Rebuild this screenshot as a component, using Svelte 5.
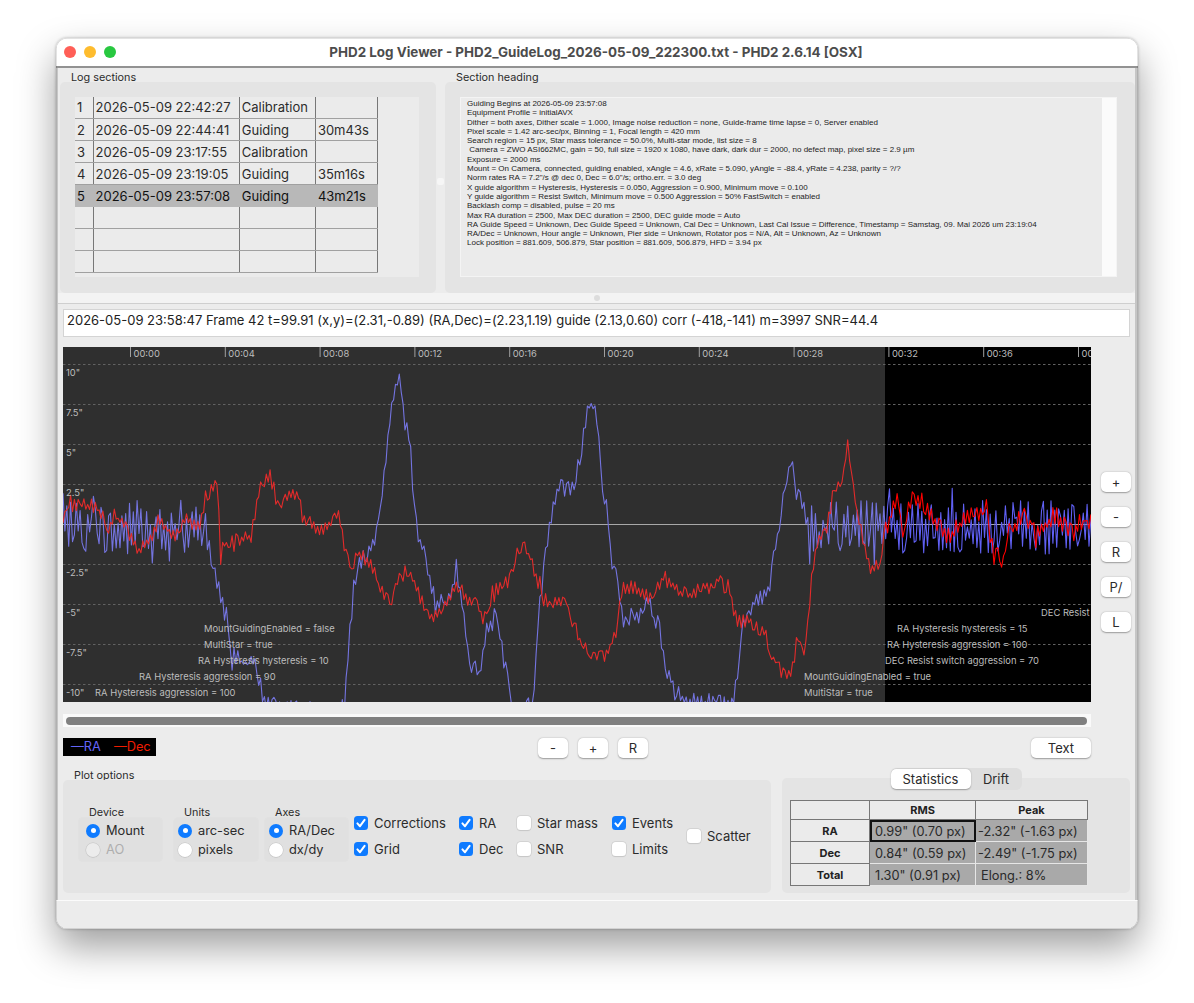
<script>
  const sections = [
    ['1', '2026-05-09 22:42:27', 'Calibration', ''],
    ['2', '2026-05-09 22:44:41', 'Guiding', '30m43s'],
    ['3', '2026-05-09 23:17:55', 'Calibration', ''],
    ['4', '2026-05-09 23:19:05', 'Guiding', '35m16s'],
    ['5', '2026-05-09 23:57:08', 'Guiding', '43m21s'],
    ['', '', '', ''],
    ['', '', '', ''],
    ['', '', '', '']
  ];

  const heading = [
    'Guiding Begins at 2026-05-09 23:57:08',
    'Equipment Profile = initialAVX',
    'Dither = both axes, Dither scale = 1.000, Image noise reduction = none, Guide-frame time lapse = 0, Server enabled',
    'Pixel scale = 1.42 arc-sec/px, Binning = 1, Focal length = 420 mm',
    'Search region = 15 px, Star mass tolerance = 50.0%, Multi-star mode, list size = 8',
    ' Camera = ZWO ASI662MC, gain = 50, full size = 1920 x 1080, have dark, dark dur = 2000, no defect map, pixel size = 2.9 µm',
    'Exposure = 2000 ms',
    'Mount = On Camera, connected, guiding enabled, xAngle = 4.6, xRate = 5.090, yAngle = -88.4, yRate = 4.238, parity = ?/?',
    'Norm rates RA = 7.2"/s @ dec 0, Dec = 6.0"/s; ortho.err. = 3.0 deg',
    'X guide algorithm = Hysteresis, Hysteresis = 0.050, Aggression = 0.900, Minimum move = 0.100',
    'Y guide algorithm = Resist Switch, Minimum move = 0.500 Aggression = 50% FastSwitch = enabled',
    'Backlash comp = disabled, pulse = 20 ms',
    'Max RA duration = 2500, Max DEC duration = 2500, DEC guide mode = Auto',
    'RA Guide Speed = Unknown, Dec Guide Speed = Unknown, Cal Dec = Unknown, Last Cal Issue = Difference, Timestamp = Samstag, 09. Mai 2026 um 23:19:04',
    'RA/Dec = Unknown, Hour angle = Unknown, Pier side = Unknown, Rotator pos = N/A, Alt = Unknown, Az = Unknown',
    'Lock position = 881.609, 506.879, Star position = 881.609, 506.879, HFD = 3.94 px'
  ];

  const gridY = [364, 404, 444, 484, 564, 604, 644, 684];
  const yLabels = [
    ['10"', 372], ['7.5"', 412], ['5"', 452], ['2.5"', 492],
    ['-2.5"', 572], ['-5"', 612], ['-7.5"', 652], ['-10"', 692]
  ];
  const ticks = ['00:00', '00:04', '00:08', '00:12', '00:16', '00:20', '00:24', '00:28', '00:32', '00:36', '00:40'];
  const events = [
    ['MountGuidingEnabled = false', 204, 628],
    ['MultiStar = true', 204, 644],
    ['RA Hysteresis hysteresis = 10', 198, 660],
    ['RA Hysteresis aggression = 90', 139, 676],
    ['RA Hysteresis aggression = 100', 95, 692],
    ['DEC Resist', 1041, 612],
    ['RA Hysteresis hysteresis = 15', 897, 628],
    ['RA Hysteresis aggression = 100', 887, 644],
    ['DEC Resist switch aggression = 70', 885, 660],
    ['MountGuidingEnabled = true', 804, 676],
    ['MultiStar = true', 804, 692]
  ];

  // trend of each trace, in screen coordinates, noise goes on top
  const raKeys = [[63,527],[195,527],[205,530],[216,580],[223,603],[228,617],[229,657],[243,657],[256,663],[264,706],[344,715],[346,680],[351,623],[354,580],[363,557],[376,540],[381,507],[384,473],[388,437],[394,390],[400,378],[403,410],[409,440],[411,457],[414,507],[418,537],[426,553],[429,580],[436,607],[449,600],[457,573],[463,607],[470,667],[480,673],[487,630],[497,620],[503,657],[510,693],[512,706],[533,706],[535,667],[538,617],[545,557],[550,523],[558,487],[573,487],[580,457],[585,420],[592,394],[595,407],[600,447],[603,490],[608,517],[610,553],[617,577],[623,617],[637,617],[650,600],[660,633],[667,673],[677,695],[697,702],[733,706],[738,667],[743,623],[757,597],[767,600],[772,570],[777,537],[780,517],[785,493],[788,465],[792,458],[795,487],[803,507],[807,527],[1091,527]];
  const decKeys = [[63,518],[69,505],[96,506],[109,527],[116,512],[124,523],[139,553],[151,537],[159,519],[173,538],[186,519],[199,527],[206,500],[218,476],[220,566],[223,545],[236,540],[251,537],[259,490],[271,474],[278,508],[288,497],[299,495],[303,520],[323,530],[339,512],[344,547],[353,568],[358,552],[373,567],[379,587],[391,605],[399,578],[409,569],[418,593],[428,614],[438,617],[454,590],[460,587],[467,598],[478,603],[482,624],[492,593],[510,580],[515,559],[522,544],[530,557],[538,583],[550,608],[565,597],[570,620],[582,640],[590,658],[607,655],[617,630],[622,589],[633,587],[650,598],[663,579],[680,592],[693,592],[717,582],[728,582],[737,621],[750,621],[765,633],[773,661],[787,678],[793,668],[798,635],[803,655],[808,623],[812,572],[817,542],[827,527],[833,495],[843,475],[848,440],[853,483],[858,520],[867,553],[870,568],[880,565],[885,533],[898,495],[903,538],[910,499],[922,502],[933,520],[950,535],[970,515],[987,509],[993,555],[1002,558],[1010,530],[1020,519],[1037,535],[1053,515],[1073,535],[1080,522],[1091,523]];

  function rng(seed) {
    let s = seed;
    return () => {
      s = (Math.imul(s, 1664525) + 1013904223) >>> 0;
      return ((s >>> 8) % 65536) / 65536;
    };
  }

  function trace(keys, ampAt, seed, step) {
    const rand = rng(seed);
    const pts = [];
    let k = 0;
    let flip = 1;
    for (let x = 63; x <= 1091; x += step) {
      while (k < keys.length - 2 && keys[k + 1][0] < x) k++;
      const [x0, y0] = keys[k];
      const [x1, y1] = keys[k + 1];
      const y = y0 + (y1 - y0) * (x - x0) / (x1 - x0);
      // mostly alternates up and down, which gives the spiky look of guide data
      flip = rand() > 0.2 ? -flip : flip;
      const size = Math.pow(rand(), 0.8);
      const spike = rand() > 0.92 ? 1.6 : 1;
      pts.push(x.toFixed(1) + ',' + (y + flip * size * ampAt(x) * spike).toFixed(1));
    }
    return pts.join(' ');
  }

  const raAmp = (x) => (x < 207 || x > 807 ? 27 : 10);
  const decAmp = (x) => (x > 885 ? 10 : 7);
  const raLine = trace(raKeys, raAmp, 11, 1.9);
  const decLine = trace(decKeys, decAmp, 47, 1.9);

  const zoomButtons = ['+', '-', 'R', 'P/', 'L'];
  const options1 = [
    { label: 'Device', items: [['Mount', true, false], ['AO', false, true]], cls: 'device' },
    { label: 'Units', items: [['arc-sec', true, false], ['pixels', false, false]], cls: 'units' },
    { label: 'Axes', items: [['RA/Dec', true, false], ['dx/dy', false, false]], cls: 'axes' }
  ];
  const checks = [
    { cls: 'c1', items: [['Corrections', true], ['Grid', true]] },
    { cls: 'c2', items: [['RA', true], ['Dec', true]] },
    { cls: 'c3', items: [['Star mass', false], ['SNR', false]] },
    { cls: 'c4', items: [['Events', true], ['Limits', false]] }
  ];
</script>

{#snippet checkbox(label, on)}
  <label class="check">
    <span class="box" class:on>
      {#if on}
        <svg width="14" height="14" viewBox="0 0 14 14"><path d="M3.4 7.4 L6 10.2 L10.6 3.8" fill="none" stroke="#fff" stroke-width="2" stroke-linecap="round" stroke-linejoin="round"/></svg>
      {/if}
    </span>
    {label}
  </label>
{/snippet}

<div class="window">
  <header class="titlebar">
    <div class="lights"><i class="red"></i><i class="amber"></i><i class="green"></i></div>
    <span class="title">PHD2 Log Viewer - PHD2_GuideLog_2026-05-09_222300.txt - PHD2 2.6.14 [OSX]</span>
  </header>

  <div class="content">
    <div class="top">
      <section class="group logs">
        <h3>Log sections</h3>
        <div class="groupbox">
          <div class="gridbg">
            <table class="sections">
              <tbody>
                {#each sections as row, i}
                  <tr class:selected={i === 4}>
                    <td class="n">{row[0]}</td>
                    <td class="d">{row[1]}</td>
                    <td class="k">{row[2]}</td>
                    <td class="l">{row[3]}</td>
                  </tr>
                {/each}
              </tbody>
            </table>
          </div>
        </div>
      </section>
      <div class="vsash"><span></span></div>
      <section class="group heading">
        <h3>Section heading</h3>
        <div class="groupbox">
          <div class="textarea">
            <div class="lines">
              {#each heading as line}
                <div>{line}</div>
              {/each}
            </div>
            <div class="vscroll"></div>
          </div>
        </div>
      </section>
    </div>

    <div class="hsash"><span></span></div>

    <div class="status">2026-05-09 23:58:47 Frame 42 t=99.91 (x,y)=(2.31,-0.89) (RA,Dec)=(2.23,1.19) guide (2.13,0.60) corr (-418,-141) m=3997 SNR=44.4</div>

    <div class="plotrow">
      <svg class="plot" width="1028" height="355" viewBox="63 347 1028 355">
        <defs>
          <clipPath id="selected"><rect x="63" y="347" width="822" height="355" /></clipPath>
          <clipPath id="rest"><rect x="885" y="347" width="206" height="355" /></clipPath>
        </defs>
        <rect x="63" y="347" width="1028" height="355" fill="#000" />
        <rect x="63" y="347" width="822" height="355" fill="#2f2f2f" />
        {#each gridY as y}
          <line x1="63" x2="1091" y1={y + 0.5} y2={y + 0.5} class="grid" />
        {/each}
        <line x1="63" x2="1091" y1="524.5" y2="524.5" class="zero" />
        {#each ticks as t, i}
          <line x1={130.5 + i * 94.8} x2={130.5 + i * 94.8} y1="347" y2="357" class="tick" />
          <text x={133.5 + i * 94.8} y="357" class="tl">{t}</text>
        {/each}
        <g clip-path="url(#selected)">
          <polyline points={raLine} class="trace" stroke="#7474e0" />
          <polyline points={decLine} class="trace" stroke="#e22b2b" />
        </g>
        <g clip-path="url(#rest)">
          <polyline points={raLine} class="trace" stroke="#6060f4" />
          <polyline points={decLine} class="trace" stroke="#ff0000" />
        </g>
        {#each yLabels as [t, y]}
          <text x="66" y={y + 3.5} class="tl">{t}</text>
        {/each}
        {#each events as [t, x, y]}
          <text {x} y={y + 3.5} class="tl">{t}</text>
        {/each}
      </svg>
      <div class="sidebtns">
        {#each zoomButtons as b}
          <button>{b}</button>
        {/each}
      </div>
    </div>

    <div class="scrollstrip"><div class="thumb"></div></div>

    <div class="toolrow">
      <div class="legend"><span class="ra">—RA</span><span class="dec">—Dec</span></div>
      <div class="center">
        <button>-</button>
        <button>+</button>
        <button>R</button>
      </div>
      <button class="textbtn">Text</button>
    </div>

    <div class="bottom">
      <section class="plotopts">
        <h3>Plot options</h3>
        <div class="optbox">
          {#each options1 as g}
            <div class="radiogroup {g.cls}">
              <span class="rlabel">{g.label}</span>
              <div class="rbox">
                {#each g.items as [label, on, off]}
                  <label class="radio" class:off><span class="dot" class:on></span>{label}</label>
                {/each}
              </div>
            </div>
          {/each}
          {#each checks as col}
            <div class="checkcol {col.cls}">
              {#each col.items as [label, on]}
                {@render checkbox(label, on)}
              {/each}
            </div>
          {/each}
          <div class="scatter">{@render checkbox('Scatter', false)}</div>
        </div>
      </section>

      <section class="stats">
        <div class="tabs"><span class="tab active">Statistics</span><span class="tab">Drift</span></div>
        <div class="statbox">
          <table class="stat">
            <tbody>
              <tr><th></th><th>RMS</th><th>Peak</th></tr>
              <tr><th>RA</th><td class="focus">0.99" (0.70 px)</td><td>-2.32" (-1.63 px)</td></tr>
              <tr><th>Dec</th><td>0.84" (0.59 px)</td><td>-2.49" (-1.75 px)</td></tr>
              <tr><th>Total</th><td>1.30" (0.91 px)</td><td class="elong">Elong.: 8%</td></tr>
            </tbody>
          </table>
        </div>
      </section>
    </div>
  </div>
  <footer class="foot"></footer>
</div>

<style>
  :global(body) { margin: 0; background: #fff; }
  :global(#app) { height: 1003px; overflow: hidden; position: relative; }
  * { box-sizing: border-box; }
  .window {
    position: relative;
    margin: 38px 0 0 56px;
    width: 1082px;
    height: 891px;
    border-radius: 11px;
    overflow: hidden;
    background: #ececec;
    display: flex;
    flex-direction: column;
    font-family: Inter, "Noto Sans", sans-serif;
    font-size: 13px;
    color: #2b2b2b;
    box-shadow: 0 18px 38px rgba(0, 0, 0, 0.38), 0 0 3px rgba(0, 0, 0, 0.3);
  }
  .window::after {
    content: '';
    position: absolute;
    inset: 0;
    border-radius: 11px;
    box-shadow: inset 0 0 0 0.5px rgba(0, 0, 0, 0.22);
    pointer-events: none;
  }

  .titlebar {
    height: 30px;
    flex: none;
    background: #fff;
    border-bottom: 2px solid #929292;
    display: flex;
    align-items: center;
    justify-content: center;
    position: relative;
  }
  .lights { position: absolute; left: 8px; top: 8px; display: flex; gap: 8px; }
  .lights i { width: 12px; height: 12px; border-radius: 50%; display: block; }
  .red { background: #ff5f57; }
  .amber { background: #febc2e; }
  .green { background: #28c840; }
  .title { font-weight: 700; font-size: 13.4px; color: #4c4c4c; margin-right: 2px; }

  .content {
    flex: none;
    height: 832px;
    border-left: 2px solid #c6c6c6;
    border-right: 3px solid #c6c6c6;
    display: flex;
    flex-direction: column;
  }

  .top { height: 225px; flex: none; display: flex; padding-left: 2px; }
  .group h3 {
    margin: 0;
    height: 14px;
    font-size: 10.8px;
    font-weight: 400;
    line-height: 19px;
    padding-left: 11px;
    color: #2b2b2b;
  }
  .groupbox { background: #e4e4e4; border-radius: 5px; height: 211px; padding: 15px; }
  .logs { width: 376px; flex: none; }
  .heading { width: 690px; flex: none; }
  .vsash { width: 9px; flex: none; display: flex; align-items: center; justify-content: center; padding-top: 2px; }
  .vsash span { width: 7px; height: 7px; background: #f6f6f6; border-radius: 2px; }
  .gridbg { width: 344px; height: 180px; background: #ebebeb; overflow: hidden; }

  .sections { border-collapse: collapse; table-layout: fixed; width: 303px; margin-top: -1px; }
  .sections td {
    height: 22px;
    padding: 2px 0 0 2px;
    border-right: 1px solid #777;
    border-bottom: 1px solid #a0a0a0;
    white-space: nowrap;
    overflow: hidden;
    line-height: 19px;
    vertical-align: top;
    color: #2b2b2b;
  }
  .sections .n { width: 18px; }
  .sections .d { width: 146px; }
  .sections .k { width: 76px; }
  .sections .l { width: 62px; }
  .selected td { background: #b8b8b8; color: #111; border-right-color: #b8b8b8; border-bottom-color: #b8b8b8; }

  .textarea { height: 180px; display: flex; border: 1px solid #f4f4f4; width: 657px; margin-left: 0; }
  .lines {
    flex: 1;
    padding: 1px 0 0 6px;
    background: #ebebeb;
    font-family: "Liberation Sans", Arial, sans-serif;
    font-size: 8px;
    line-height: 9.3px;
    color: #1c1c1c;
    white-space: pre;
    overflow: hidden;
  }
  .vscroll { width: 14px; background: #fbfbfb; flex: none; }

  .hsash { height: 11px; flex: none; background: #f3f3f3; border-bottom: 1px solid #cfcfcf; position: relative; display: flex; justify-content: center; align-items: center; }
  .hsash span { width: 6px; height: 6px; border-radius: 50%; background: #dcdcdc; }

  .status {
    margin: 5px 5px 0 5px;
    height: 28px;
    flex: none;
    background: #fff;
    border: 1px solid #d4d4d4;
    padding-left: 3px;
    line-height: 20px;
    font-size: 13px;
    white-space: nowrap;
    color: #222;
  }

  .plotrow { margin: 10px 0 0 5px; display: flex; height: 355px; flex: none; }
  .plot { display: block; flex: none; }
  .grid { stroke: #626262; stroke-width: 1; stroke-dasharray: 2.5 2.5; }
  .zero { stroke: #a8a8a8; stroke-width: 1; }
  .tick { stroke: #a0a0a0; stroke-width: 1; }
  .tl { fill: #bdbdbd; font-family: Inter, sans-serif; font-size: 9.4px; }
  .trace { fill: none; stroke-width: 1.1; stroke-linejoin: round; }

  .sidebtns { margin-left: 10px; padding-top: 125px; display: flex; flex-direction: column; gap: 15px; }
  button {
    width: 30px;
    height: 20px;
    padding: 0;
    border: none;
    background: #fff;
    border-radius: 5px;
    box-shadow: 0 0.5px 1.5px rgba(0, 0, 0, 0.35);
    font-family: inherit;
    font-size: 13px;
    line-height: 20px;
    color: #2b2b2b;
  }

  .scrollstrip { margin: 12px 0 0 5px; width: 1028px; height: 13px; background: #fafafa; padding: 3px; flex: none; }
  .thumb { height: 8px; border-radius: 4px; background: #808080; margin-right: 1px; }

  .toolrow { margin: 11px 0 0 5px; width: 1028px; height: 20px; display: flex; position: relative; flex: none; }
  .legend { width: 93px; height: 18px; background: #000; font-size: 12.8px; line-height: 18px; display: flex; padding-left: 8px; gap: 13px; }
  .ra { color: #6464f8; }
  .dec { color: #f01c00; }
  .center { display: flex; gap: 10px; margin-left: 382px; }
  .textbtn { width: 60px; margin-left: auto; }

  .bottom { display: flex; margin: 10px 0 0 5px; flex: none; }
  .plotopts { width: 708px; flex: none; }
  .plotopts h3 { margin: 0; height: 12px; font-size: 10.8px; font-weight: 400; line-height: 16px; padding-left: 11px; }
  .optbox {
    height: 113px;
    background: #e4e4e4;
    border-radius: 5px;
    display: flex;
    position: relative;
    padding: 26px 0 0 15px;
  }
  .radiogroup { flex: none; }
  .rlabel { display: block; height: 11px; font-size: 10.8px; line-height: 14px; padding-left: 11px; margin-bottom: 0; }
  .rbox { background: #e0e0e0; border-radius: 5px; height: 45px; padding: 3px 0 0 7px; border: 1px solid #e1e1e1; }
  .units .rbox { padding-left: 4px; }
  .axes .rbox { padding-left: 4px; }
  .device { width: 85px; margin-right: 10px; }
  .units { width: 86px; margin-right: 5px; }
  .axes { width: 85px; margin-right: 5px; }
  .radio { display: flex; align-items: center; gap: 6px; height: 19px; font-size: 12.8px; }
  .radio.off { color: #aeaeae; }
  .dot { width: 14px; height: 14px; border-radius: 50%; background: #fff; box-shadow: 0 0 0 0.5px #c4c4c4, 0 0.5px 1px rgba(0, 0, 0, 0.15); flex: none; position: relative; }
  .dot.on { background: #0f7bff; box-shadow: none; }
  .dot.on::after { content: ''; position: absolute; inset: 4.5px; background: #fff; border-radius: 50%; }
  .radio.off .dot { background: #ececec; }

  .checkcol { display: flex; flex-direction: column; gap: 12px; flex: none; padding-top: 10px; }
  .c1 { width: 105px; }
  .c2 { width: 58px; }
  .c3 { width: 95px; }
  .c4 { width: 75px; }
  .scatter { padding-top: 23px; }
  .check { display: flex; align-items: center; gap: 6px; height: 14px; font-size: 13px; white-space: nowrap; }
  .box { width: 14px; height: 14px; border-radius: 3.5px; background: #fff; box-shadow: 0 0 0 0.5px #c6c6c6, 0 0.5px 1px rgba(0, 0, 0, 0.12); flex: none; display: block; }
  .box.on { background: #0f7bff; box-shadow: none; }
  .box svg { display: block; }

  .stats { margin-left: 11px; width: 348px; flex: none; display: flex; flex-direction: column; align-items: center; }
  .tabs {
    position: relative;
    z-index: 1;
    display: flex;
    height: 22px;
    background: #dedede;
    border-radius: 6px;
    margin-bottom: -12px;
  }
  .tab { width: 51px; text-align: center; line-height: 22px; font-size: 13px; }
  .tab.active { width: 80px; background: #fff; border-radius: 5px; margin: 1px 0; line-height: 20px; box-shadow: 0 0.5px 1.5px rgba(0, 0, 0, 0.3); }
  .statbox { width: 100%; height: 115px; background: #e4e4e4; border-radius: 5px; padding: 22px 0 0 8px; }
  .stat { border-collapse: collapse; table-layout: fixed; width: 298px; }
  .stat th {
    background: #ebebeb;
    font-size: 11px;
    font-weight: 700;
    padding: 1px 0 0 0;
    height: 22px;
    border: 1px solid #777;
    border-width: 0 1px 1px 1px;
    color: #222;
  }
  .stat tr:first-child th { height: 19px; border-top-width: 1px; padding-top: 0; }
  .stat tr th:first-child { width: 79px; }
  .stat tr:first-child th:nth-child(2) { width: 106px; }
  .stat td {
    background: #a9a9a9;
    height: 22px;
    padding: 1px 0 0 5px;
    font-size: 12.8px;
    border: 1px solid #e6e6e6;
    white-space: nowrap;
    color: #2a2a2a;
  }
  .stat td:last-child { padding-left: 2px; }
  .stat td.elong { padding-left: 5px; }
  .stat td.focus { outline: 2px solid #111; outline-offset: -2px; }

  .foot { flex: 1; background: #ececec; border-top: 1px solid #fbfbfb; }
</style>
